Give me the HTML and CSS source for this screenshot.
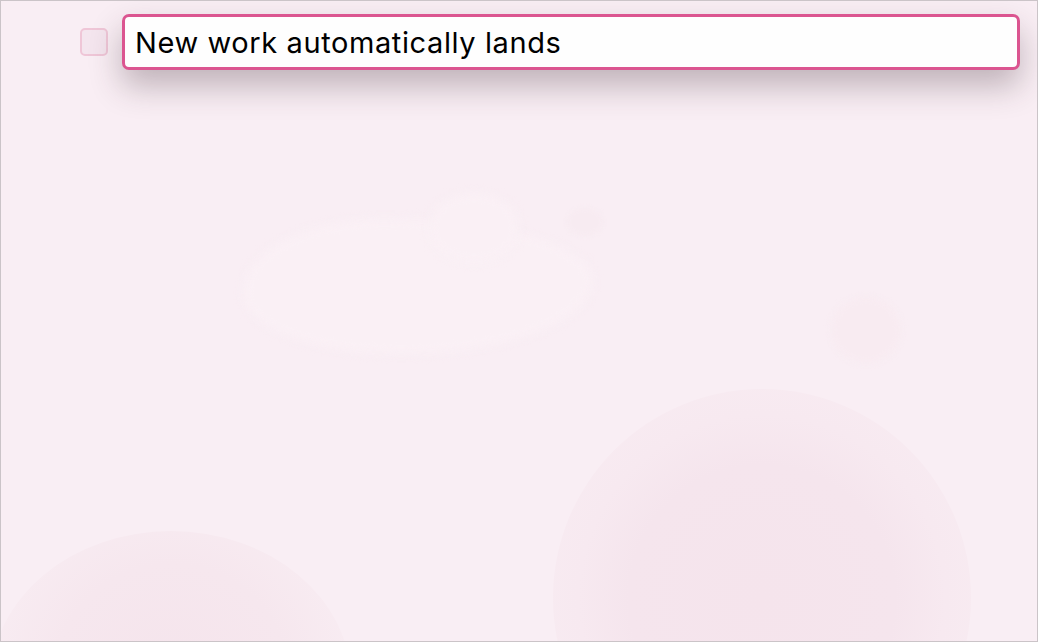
FILE: index.html
```html
<!DOCTYPE html>
<html lang="en">
<head>
    <meta charset="UTF-8">
    <meta name="viewport" content="width=device-width, initial-scale=1.0">
    <title>Todo</title>
    <link rel="stylesheet" href="styles.css">
</head>
<body>
    <div class="backdrop">
        <div class="blob blob-light"></div>
        <div class="blob blob-light-top"></div>
        <div class="blob blob-dot"></div>
        <div class="blob blob-small"></div>
        <div class="blob blob-big"></div>
        <div class="blob blob-corner"></div>
    </div>

    <div class="todo-row">
        <span class="todo-check"></span>
        <input type="text" class="todo-input" value="New work automatically lands">
    </div>
</body>
</html>
```

FILE: styles.css
```css
html, body {
    height: 100%;
}
html {
    overflow: hidden;
}
body {
    margin: 0;
    box-sizing: border-box;
    border: 1px solid #cbc4c8;
    background-color: #f9eef4;
    font-family: Inter, "Liberation Sans", Arial, sans-serif;
    position: relative;
    overflow: hidden;
}
.backdrop {
    position: absolute;
    inset: 0;
    z-index: 0;
    overflow: hidden;
}
.blob {
    position: absolute;
    border-radius: 50%;
}
.blob-light {
    left: 242px;
    top: 218px;
    width: 350px;
    height: 135px;
    background: #faf0f5;
    border-radius: 40% 60% 55% 45% / 55% 45% 55% 45%;
    filter: blur(5px);
}
.blob-light-top {
    left: 428px;
    top: 192px;
    width: 90px;
    height: 70px;
    background: #faf0f5;
    filter: blur(5px);
}
.blob-dot {
    left: 566px;
    top: 207px;
    width: 36px;
    height: 28px;
    background: #f7ebf1;
    filter: blur(2px);
}
.blob-small {
    left: 830px;
    top: 296px;
    width: 70px;
    height: 66px;
    background: #f8ebf1;
    filter: blur(3px);
}
.blob-big {
    left: 552px;
    top: 388px;
    width: 418px;
    height: 418px;
    background: radial-gradient(circle, #f5e4ec 0%, #f5e5ed 45%, #f7e9f0 62%, #f8ecf2 85%, rgba(249, 238, 244, 0) 100%);
}
.blob-corner {
    left: -10px;
    top: 530px;
    width: 360px;
    height: 300px;
    background: radial-gradient(circle, #f5e4ec 0%, #f6e7ee 50%, #f8ecf2 80%, rgba(249, 238, 244, 0) 100%);
}
.todo-row {
    position: relative;
    z-index: 1;
    display: flex;
    align-items: center;
    gap: 14px;
    padding: 13px 17px 0 79px;
}
.todo-check {
    flex: none;
    width: 28px;
    height: 28px;
    box-sizing: border-box;
    border: 2px solid #efc6d7;
    border-radius: 5px;
    background-color: #f4e5ee;
}
.todo-input {
    flex: 1;
    min-width: 0;
    height: 56px;
    box-sizing: border-box;
    margin: 0;
    padding: 0 10px;
    border: 3px solid #db5590;
    border-radius: 7px;
    background-color: #fefefe;
    color: #000;
    font-family: Inter, "Liberation Sans", Arial, sans-serif;
    font-size: 29px;
    letter-spacing: 0.6px;
    outline: none;
    box-shadow: 0 16px 32px rgba(60, 40, 50, 0.3);
}
```
